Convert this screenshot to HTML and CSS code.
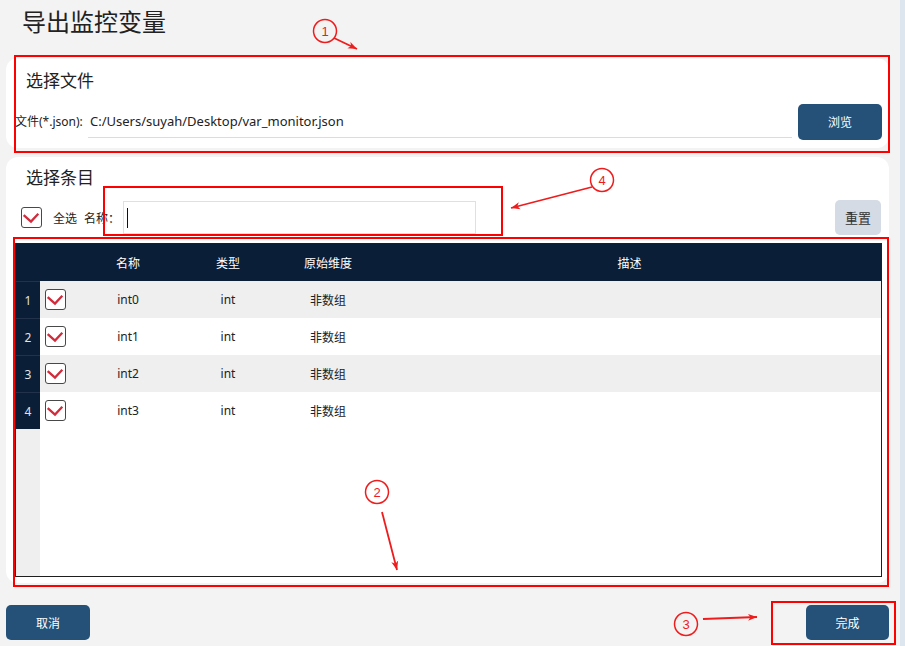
FILE: index.html
```html
<!DOCTYPE html>
<html lang="zh-CN">
<head>
  <meta charset="UTF-8">
  <title>导出监控变量</title>
  <link rel="stylesheet" href="styles.css">
</head>
<body>
  <div class="app">
    <div class="main">
      <h1 class="title">导出监控变量</h1>

      <div class="card card-file">
        <div class="card-title">选择文件</div>
        <div class="file-row">
          <span class="file-label">文件(*.json):</span>
          <div class="file-input">C:/Users/suyah/Desktop/var_monitor.json</div>
          <button class="btn btn-blue btn-browse">浏览</button>
        </div>
      </div>

      <div class="card card-items">
        <div class="card-title">选择条目</div>
        <div class="controls">
          <span class="check"><svg viewBox="0 0 17 17"><path d="M1.6 6.8 L8.5 12.8 L15.4 5.5"/></svg></span>
          <span class="select-all">全选</span>
          <span class="name-label">名称：</span>
          <div class="search"><span class="caret"></span></div>
          <button class="btn btn-reset">重置</button>
        </div>

        <div class="table">
          <div class="thead">
            <div class="num"></div>
            <div></div>
            <div class="cell">名称</div>
            <div class="cell">类型</div>
            <div class="cell">原始维度</div>
            <div class="cell">描述</div>
          </div>
          <div class="trow odd">
            <div class="num">1</div>
            <div class="cell-check"><span class="check"><svg viewBox="0 0 17 17"><path d="M1.6 6.8 L8.5 12.8 L15.4 5.5"/></svg></span></div>
            <div class="cell">int0</div>
            <div class="cell">int</div>
            <div class="cell">非数组</div>
            <div class="cell"></div>
          </div>
          <div class="trow">
            <div class="num">2</div>
            <div class="cell-check"><span class="check"><svg viewBox="0 0 17 17"><path d="M1.6 6.8 L8.5 12.8 L15.4 5.5"/></svg></span></div>
            <div class="cell">int1</div>
            <div class="cell">int</div>
            <div class="cell">非数组</div>
            <div class="cell"></div>
          </div>
          <div class="trow odd">
            <div class="num">3</div>
            <div class="cell-check"><span class="check"><svg viewBox="0 0 17 17"><path d="M1.6 6.8 L8.5 12.8 L15.4 5.5"/></svg></span></div>
            <div class="cell">int2</div>
            <div class="cell">int</div>
            <div class="cell">非数组</div>
            <div class="cell"></div>
          </div>
          <div class="trow">
            <div class="num">4</div>
            <div class="cell-check"><span class="check"><svg viewBox="0 0 17 17"><path d="M1.6 6.8 L8.5 12.8 L15.4 5.5"/></svg></span></div>
            <div class="cell">int3</div>
            <div class="cell">int</div>
            <div class="cell">非数组</div>
            <div class="cell"></div>
          </div>
          <div class="filler"></div>
        </div>
      </div>

      <div class="footer">
        <button class="btn btn-blue btn-cancel">取消</button>
        <button class="btn btn-blue btn-done">完成</button>
      </div>
    </div>
    <div class="edge"></div>

    <!-- annotations -->
    <svg class="marks" width="905" height="646" viewBox="0 0 905 646">
      <defs>
        <marker id="head" markerWidth="10" markerHeight="8" refX="9" refY="4" orient="auto" markerUnits="userSpaceOnUse">
          <path d="M0 0.5 L9 4 L0 7.5 L2.5 4 Z" fill="#ee1c1c"/>
        </marker>
      </defs>
      <g class="boxes">
        <rect x="15" y="56" width="874" height="96"/>
        <rect x="104" y="187" width="398" height="48"/>
        <rect x="14" y="238" width="874" height="348"/>
        <rect x="772" y="602" width="123" height="42"/>
      </g>
      <g class="pins">
        <circle cx="325" cy="31" r="11.5"/>
        <circle cx="602" cy="180" r="11.5"/>
        <circle cx="377" cy="492" r="11.5"/>
        <circle cx="686" cy="624" r="11.5"/>
        <line x1="334" y1="38" x2="357" y2="49" marker-end="url(#head)"/>
        <line x1="592" y1="187" x2="511" y2="208" marker-end="url(#head)"/>
        <line x1="382" y1="512" x2="397" y2="570" marker-end="url(#head)"/>
        <line x1="703" y1="619" x2="757" y2="617" marker-end="url(#head)"/>
      </g>
      <g class="pin-text">
        <text x="325" y="35.5">1</text>
        <text x="602" y="184.5">4</text>
        <text x="377" y="496.5">2</text>
        <text x="686" y="628.5">3</text>
      </g>
    </svg>
  </div>
</body>
</html>
```

FILE: styles.css
```css
body {
  margin: 0;
  background-color: #f3f3f3;
  color: #222;
  font-family: "Noto Sans", "Noto Sans CJK SC", sans-serif;
}
.app {
  position: relative;
  display: flex;
  width: 905px;
  height: 646px;
  overflow: hidden;
}
.main {
  flex: 1;
  padding: 0 11px 0 6px;
}
.edge {
  width: 5px;
  background-color: #dde6ef;
}
.title {
  margin: 0;
  padding: 5px 0 0 16px;
  font-size: 24px;
  font-weight: normal;
  line-height: 34px;
}
.card {
  background-color: #fff;
  border-radius: 12px;
}
.card-title {
  padding-left: 11px;
  font-size: 17px;
  line-height: 22px;
}
.card-file {
  margin-top: 19px;
  padding: 12px 7px 8px 9px;
}
.file-row {
  display: flex;
  align-items: flex-start;
  margin-top: 12px;
  height: 36px;
}
.file-label {
  width: 73px;
  font-size: 12px;
  line-height: 36px;
  white-space: nowrap;
}
.file-input {
  flex: 1;
  box-sizing: border-box;
  height: 34px;
  margin-right: 6px;
  padding: 2px 0 0 2px;
  border-bottom: 1px solid #dcdcdc;
  font-size: 13px;
  line-height: 31px;
}
.btn {
  border: none;
  border-radius: 5px;
  font-family: inherit;
  font-size: 12px;
  padding: 0;
}
.btn-blue {
  background-color: #255178;
  color: #fff;
}
.btn-browse {
  width: 84px;
  height: 36px;
}
.card-items {
  margin-top: 9px;
  padding: 10px 7px 6px 9px;
}
.controls {
  display: flex;
  align-items: center;
  height: 35px;
  margin-top: 11px;
  padding-left: 6px;
  font-size: 12px;
}
.check {
  display: inline-block;
  box-sizing: border-box;
  width: 21px;
  height: 21px;
  border: 1.5px solid #484848;
  border-radius: 3px;
  background-color: #fff;
}
.check svg {
  display: block;
  width: 18px;
  height: 18px;
}
.check path {
  fill: none;
  stroke: #d02c3c;
  stroke-width: 2.2;
}
.select-all {
  margin-left: 11px;
}
.name-label {
  margin-left: 7px;
}
.search {
  display: flex;
  align-items: center;
  box-sizing: border-box;
  width: 353px;
  height: 33px;
  margin-left: 3px;
  border: 1px solid #e0e0e0;
  background-color: #fff;
}
.caret {
  width: 1px;
  height: 20px;
  margin-left: 3px;
  background-color: #111;
}
.btn-reset {
  width: 46px;
  height: 35px;
  margin-left: auto;
  margin-right: 1px;
  background-color: #d4dbe5;
  color: #333;
  font-size: 13px;
}
.table {
  display: flex;
  flex-direction: column;
  box-sizing: border-box;
  height: 334px;
  margin-top: 8px;
  border: 1px solid #1e1e1e;
  font-size: 12px;
}
.thead,
.trow {
  display: grid;
  grid-template-columns: 24px 38px 100px 100px 100px 1fr;
  align-items: center;
  height: 37px;
}
.thead {
  background-color: #0b1e38;
  color: #fff;
}
.trow {
  background-color: #fff;
}
.trow.odd {
  background-color: #efefef;
}
.cell {
  text-align: center;
}
.num {
  display: flex;
  align-items: center;
  justify-content: center;
  box-sizing: border-box;
  height: 100%;
  background-color: #0b1e38;
  color: #dfe5ec;
}
.trow .num {
  border-top: 1px solid #21324a;
}
.cell-check {
  display: flex;
  padding-left: 5px;
}
.filler {
  flex: 1;
  background: linear-gradient(to right, #efefef 24px, #fff 24px);
}
.footer {
  display: flex;
  justify-content: space-between;
  margin-top: 22px;
}
.btn-cancel {
  width: 84px;
  height: 35px;
}
.btn-done {
  width: 83px;
  height: 35px;
}
.marks {
  position: absolute;
  top: 0;
  left: 0;
  pointer-events: none;
}
.boxes rect {
  fill: none;
  stroke: #ff0000;
  stroke-width: 2;
}
.pins circle {
  fill: none;
  stroke: #ee1c1c;
  stroke-width: 1.5;
}
.pins line {
  stroke: #ee1c1c;
  stroke-width: 1.8;
}
.pin-text text {
  fill: #ee1c1c;
  font-family: "Liberation Sans", sans-serif;
  font-size: 13px;
  text-anchor: middle;
}
```
